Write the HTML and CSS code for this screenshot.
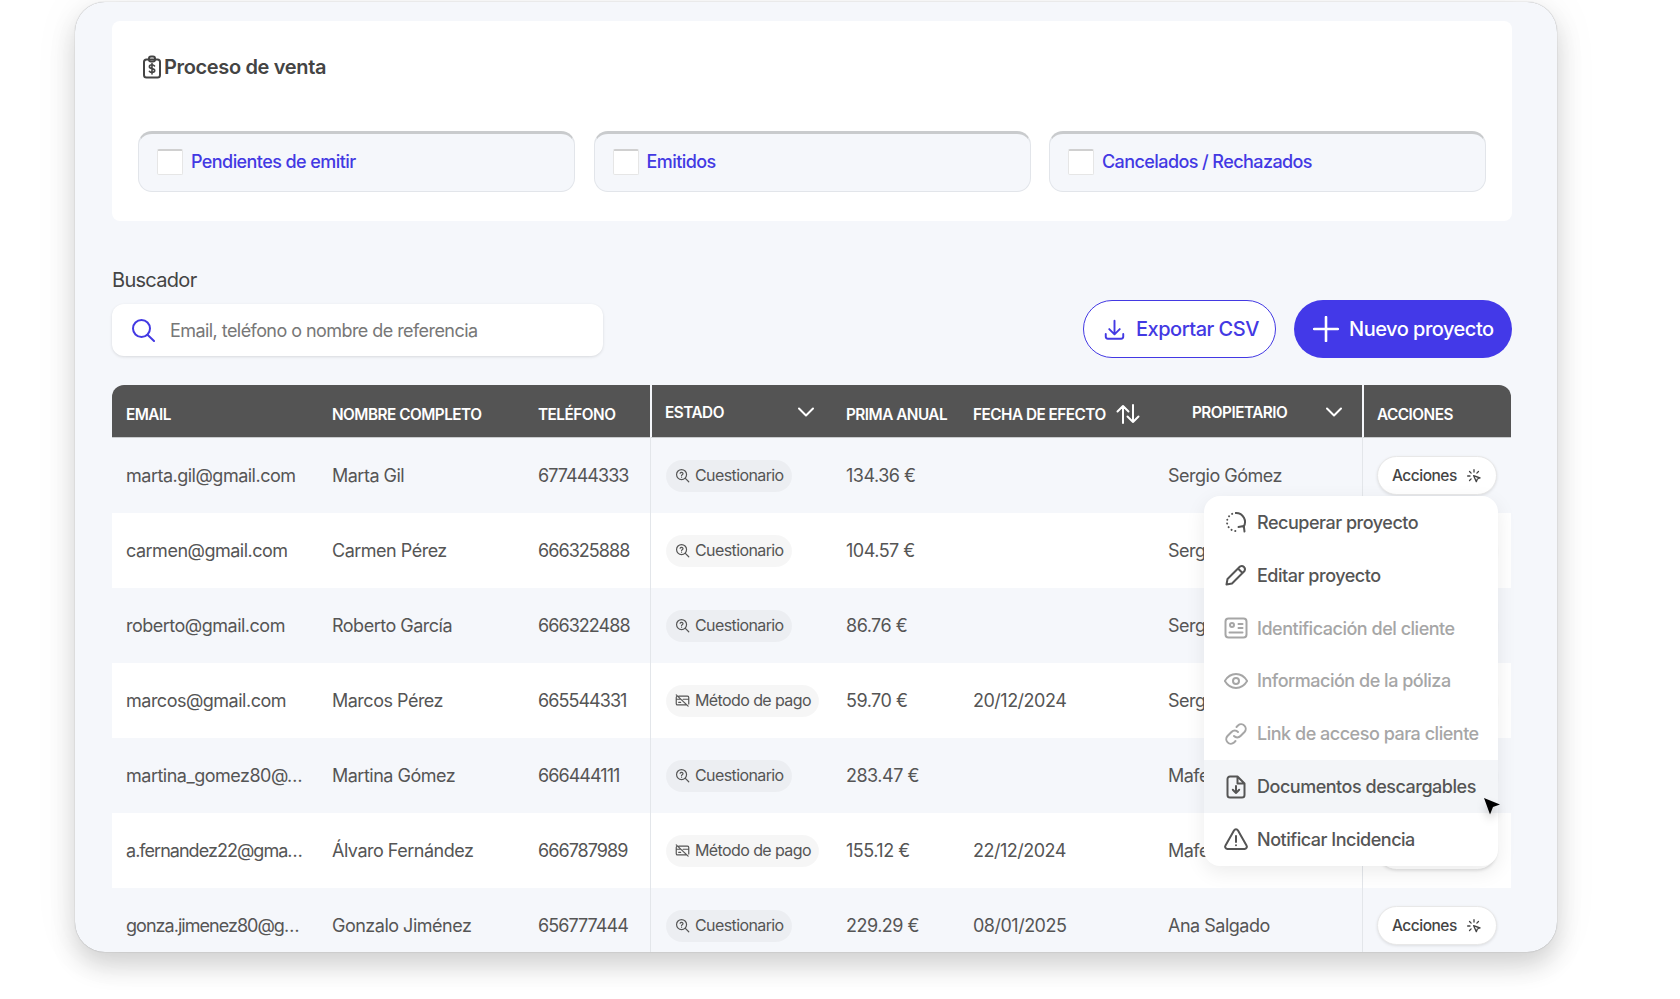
FILE: index.html
```html
<!DOCTYPE html>
<html lang="es">

<head>
    <meta charset="UTF-8">
    <link rel="stylesheet" href="styles.css">
    <title>Proceso de venta</title>
</head>

<body>
    <svg class="sprite" xmlns="http://www.w3.org/2000/svg">
        <symbol id="iconQuestion" viewBox="0 0 24 24">
            <circle cx="10.5" cy="10.5" r="8" />
            <path d="M16.5 16.5 22 22M8.2 8.4a2.4 2.4 0 0 1 4.6.6c0 1.5-2.3 1.9-2.3 3.1M10.5 14.6v.1" />
        </symbol>
        <symbol id="iconCard" viewBox="0 0 24 24">
            <path d="M6 5h14a2 2 0 0 1 2 2v10.500M18 19H4a2 2 0 0 1-2-2V7a2 2 0 0 1 .8-1.600M2 10h6M13 10h9M2 3l19 18M6 15h3" />
        </symbol>
        <symbol id="iconClick" viewBox="0 0 24 24">
            <path d="M11.500 11.500 21 15l-4 1.500-1.500 4zM12 2.500V6M5.300 5.300l2.400 2.400M18.700 5.300l-2.400 2.400M2.500 12H6M5.300 18.700l2.400-2.400" />
        </symbol>
    </svg>

    <div class="card">
        <section class="panel">
            <h1 class="panelTitle">
                <svg class="icon" viewBox="0 0 24 24">
                    <rect x="4" y="4.500" width="16" height="18" rx="2.500" />
                    <rect x="9" y="1.500" width="6" height="5" rx="2" />
                    <path class="thin" d="M14.500 11c-.6-.8-1.500-1.200-2.500-1.200-1.500 0-2.600.7-2.600 1.900 0 2.600 5.300 1.200 5.300 3.900 0 1.200-1.200 1.900-2.700 1.900-1.100 0-2-.4-2.600-1.200M12 8.500v10.500" />
                </svg>
                Proceso de venta
            </h1>
            <div class="filters">
                <label class="filter"><span class="checkbox"></span>Pendientes de emitir</label>
                <label class="filter"><span class="checkbox"></span>Emitidos</label>
                <label class="filter"><span class="checkbox"></span>Cancelados / Rechazados</label>
            </div>
        </section>

        <div class="toolbar">
            <div class="search">
                <div class="searchLabel">Buscador</div>
                <div class="searchBox">
                    <svg class="searchIcon" viewBox="0 0 24 24">
                        <circle cx="10.500" cy="10.500" r="8.500" />
                        <path d="M16.500 16.800 23 23" />
                    </svg>
                    <span>Email, teléfono o nombre de referencia</span>
                </div>
            </div>
            <div class="toolbarButtons">
                <div class="button outline">
                    <svg class="buttonIcon" viewBox="0 0 24 24">
                        <path d="M12 2v15M6 11.500l6 6 6-6M2 17v3a2.500 2.500 0 0 0 2.500 2.500h15A2.500 2.500 0 0 0 22 20v-3" />
                    </svg>
                    Exportar CSV
                </div>
                <div class="button solid">
                    <svg class="buttonIcon plus" viewBox="0 0 24 24">
                        <path d="M12 1v22M1 12h22" />
                    </svg>
                    Nuevo proyecto
                </div>
            </div>
        </div>

        <table class="projects">
            <colgroup>
                <col class="colEmail">
                <col class="colName">
                <col class="colPhone">
                <col class="colState">
                <col class="colPrice">
                <col class="colDate">
                <col class="colOwner">
                <col class="colActions">
            </colgroup>
            <thead>
                <tr>
                    <th>Email</th>
                    <th>Nombre completo</th>
                    <th>Teléfono</th>
                    <th class="divider">
                        <div class="thFilter">Estado
                            <svg class="chevron" viewBox="0 0 16 10"><path d="M1 1.500 8 8.500l7-7" /></svg>
                        </div>
                    </th>
                    <th>Prima anual</th>
                    <th>
                        <div class="thSort">Fecha de efecto
                            <svg class="sort" viewBox="0 0 24 20"><path d="M7 19V2M1.500 7.500 7 2l5.500 5.500M17 1v17M11.500 12.500 17 18l5.500-5.500" /></svg>
                        </div>
                    </th>
                    <th>
                        <div class="thFilter owner">Propietario
                            <svg class="chevron" viewBox="0 0 16 10"><path d="M1 1.500 8 8.500l7-7" /></svg>
                        </div>
                    </th>
                    <th class="divider">Acciones</th>
                </tr>
            </thead>
            <tbody>
                <tr>
                    <td>marta.gil@gmail.com</td>
                    <td>Marta Gil</td>
                    <td class="phone">677444333</td>
                    <td class="divider"><span class="pill"><svg class="pillIcon"><use href="#iconQuestion" /></svg>Cuestionario</span></td>
                    <td>134.36 €</td>
                    <td></td>
                    <td>Sergio Gómez</td>
                    <td class="divider"><span class="actions">Acciones<svg class="clickIcon"><use href="#iconClick" /></svg></span></td>
                </tr>
                <tr>
                    <td>carmen@gmail.com</td>
                    <td>Carmen Pérez</td>
                    <td class="phone">666325888</td>
                    <td class="divider"><span class="pill"><svg class="pillIcon"><use href="#iconQuestion" /></svg>Cuestionario</span></td>
                    <td>104.57 €</td>
                    <td></td>
                    <td>Sergio Gómez</td>
                    <td class="divider"><span class="actions">Acciones<svg class="clickIcon"><use href="#iconClick" /></svg></span></td>
                </tr>
                <tr>
                    <td>roberto@gmail.com</td>
                    <td>Roberto García</td>
                    <td class="phone">666322488</td>
                    <td class="divider"><span class="pill"><svg class="pillIcon"><use href="#iconQuestion" /></svg>Cuestionario</span></td>
                    <td>86.76 €</td>
                    <td></td>
                    <td>Sergio Gómez</td>
                    <td class="divider"><span class="actions">Acciones<svg class="clickIcon"><use href="#iconClick" /></svg></span></td>
                </tr>
                <tr>
                    <td>marcos@gmail.com</td>
                    <td>Marcos Pérez</td>
                    <td class="phone">665544331</td>
                    <td class="divider"><span class="pill"><svg class="pillIcon"><use href="#iconCard" /></svg>Método de pago</span></td>
                    <td>59.70 €</td>
                    <td>20/12/2024</td>
                    <td>Sergio Gómez</td>
                    <td class="divider"><span class="actions">Acciones<svg class="clickIcon"><use href="#iconClick" /></svg></span></td>
                </tr>
                <tr>
                    <td>martina_gomez80@…</td>
                    <td>Martina Gómez</td>
                    <td class="phone">666444111</td>
                    <td class="divider"><span class="pill"><svg class="pillIcon"><use href="#iconQuestion" /></svg>Cuestionario</span></td>
                    <td>283.47 €</td>
                    <td></td>
                    <td>Mafe Ortiz</td>
                    <td class="divider"><span class="actions">Acciones<svg class="clickIcon"><use href="#iconClick" /></svg></span></td>
                </tr>
                <tr>
                    <td class="cut">a.fernandez22@gma…</td>
                    <td>Álvaro Fernández</td>
                    <td class="phone">666787989</td>
                    <td class="divider"><span class="pill"><svg class="pillIcon"><use href="#iconCard" /></svg>Método de pago</span></td>
                    <td>155.12 €</td>
                    <td>22/12/2024</td>
                    <td>Mafe Ortiz</td>
                    <td class="divider"><span class="actions">Acciones<svg class="clickIcon"><use href="#iconClick" /></svg></span></td>
                </tr>
                <tr>
                    <td class="cut">gonza.jimenez80@g…</td>
                    <td>Gonzalo Jiménez</td>
                    <td class="phone">656777444</td>
                    <td class="divider"><span class="pill"><svg class="pillIcon"><use href="#iconQuestion" /></svg>Cuestionario</span></td>
                    <td>229.29 €</td>
                    <td>08/01/2025</td>
                    <td>Ana Salgado</td>
                    <td class="divider"><span class="actions">Acciones<svg class="clickIcon"><use href="#iconClick" /></svg></span></td>
                </tr>
            </tbody>
        </table>

        <div class="menu">
            <div class="menuItem">
                <svg class="menuIcon" viewBox="0 0 24 24">
                    <path d="M12 3a9 9 0 0 1 7.500 14" />
                    <path class="dots" d="M12 3a9 9 0 0 0 0 18h3" />
                    <path d="M20.500 21.500 19.800 16l-5.300 1" />
                </svg>
                Recuperar proyecto
            </div>
            <div class="menuItem">
                <svg class="menuIcon" viewBox="0 0 24 24">
                    <path d="M3.500 16 16 3.500a3.300 3.300 0 0 1 4.500 4.500L8 20.500l-5.500 1zM14 5.500 18.500 10" />
                </svg>
                Editar proyecto
            </div>
            <div class="menuItem disabled">
                <svg class="menuIcon" viewBox="0 0 24 24">
                    <rect x="1.500" y="2.500" width="21" height="19" rx="3" />
                    <circle cx="8" cy="9" r="2" />
                    <path d="M14.500 8h4M14.500 12h4M5.500 16.500h13" />
                </svg>
                Identificación del cliente
            </div>
            <div class="menuItem disabled">
                <svg class="menuIcon" viewBox="0 0 24 24">
                    <path d="M.800 12C3.500 7.500 7.300 5 12 5s8.500 2.500 11.200 7c-2.700 4.500-6.500 7-11.200 7S3.500 16.500.800 12z" />
                    <circle cx="12" cy="12" r="3" />
                </svg>
                Información de la póliza
            </div>
            <div class="menuItem disabled">
                <svg class="menuIcon" viewBox="0 0 24 24">
                    <path d="M10 14a4.500 4.500 0 0 0 6.500 0l4-4A4.600 4.600 0 0 0 14 3.500l-1.500 1.500M14 10a4.500 4.500 0 0 0-6.500 0l-4 4a4.600 4.600 0 0 0 6.500 6.500l1.500-1.500" />
                </svg>
                Link de acceso para cliente
            </div>
            <div class="menuItem hover">
                <svg class="menuIcon" viewBox="0 0 24 24">
                    <path d="M13.500 1.500H6A2.500 2.500 0 0 0 3.500 4v16A2.500 2.500 0 0 0 6 22.500h12a2.500 2.500 0 0 0 2.500-2.500V8.500zM13.500 1.500v7h7M12 11v7M8.800 14.800 12 18l3.200-3.200" />
                </svg>
                Documentos descargables
            </div>
            <div class="menuItem">
                <svg class="menuIcon" viewBox="0 0 24 24">
                    <path d="M10 3.500 1.500 18.500A2.300 2.300 0 0 0 3.500 22h17a2.300 2.300 0 0 0 2-3.500L14 3.500a2.300 2.300 0 0 0-4 0zM12 9v6M12 18.200v.1" />
                </svg>
                Notificar Incidencia
            </div>
        </div>

        <svg class="cursor" viewBox="0 0 16 17">
            <path d="M0 0 16 6.500 9 9 6 16.500z" />
        </svg>
    </div>
</body>

</html>
```
FILE: styles.css
```css
* {
    box-sizing: border-box;
}

body {
    margin: 0;
    background: white;
    font-family: Inter, "Liberation Sans", sans-serif;
    color: #555;
    letter-spacing: -0.5px;
    height: 999px;
    overflow: hidden;
}

.sprite {
    display: none;
}

svg {
    fill: none;
    stroke: currentColor;
    stroke-linecap: round;
    stroke-linejoin: round;
    flex: none;
}

.card {
    position: relative;
    width: 1482px;
    height: 950px;
    margin: 2px 0 0 75px;
    padding: 19px 45px 0 37px;
    background: #f5f7fb;
    border-radius: 30px;
    box-shadow: 0 0 1px rgba(0, 0, 0, 0.4), 0 14px 26px rgba(0, 0, 0, 0.16), 0 0 50px rgba(0, 0, 0, 0.05);
    overflow: hidden;
}

.panel {
    height: 200px;
    padding: 32px 26px 0;
    background: white;
    border-radius: 8px;
}

.panelTitle {
    display: flex;
    align-items: center;
    height: 28px;
    margin: 0;
    padding-left: 2px;
    font-size: 20px;
    font-weight: 600;
    line-height: 28px;
    letter-spacing: -0.35px;
    color: #444;
}

.panelTitle .icon {
    width: 24px;
    height: 24px;
    stroke-width: 2;
}

.panelTitle .thin {
    stroke-width: 1.600;
}

.filters {
    display: grid;
    grid-template-columns: repeat(3, 1fr);
    gap: 18.500px;
    margin-top: 50px;
}

.filter {
    display: flex;
    align-items: center;
    gap: 8px;
    height: 61px;
    padding: 0 0 2px 18px;
    background: #f5f7fb;
    border: 1px solid #e2e5ea;
    border-top: 3px solid #c9cbcd;
    border-radius: 14px;
    font-size: 18px;
    font-weight: 500;
    letter-spacing: -0.580px;
    color: #4339e3;
}

.checkbox {
    width: 26px;
    height: 26px;
    background: white;
    border: 1px solid #e6e6e6;
    border-top: 2px solid #d0d0d0;
    border-radius: 2px;
}

.toolbar {
    display: flex;
    justify-content: space-between;
    align-items: flex-end;
    height: 90px;
    margin-top: 47px;
}

.search {
    width: 491px;
    padding-bottom: 2px;
}

.searchLabel {
    height: 24px;
    margin-bottom: 12px;
    font-size: 20px;
    line-height: 24px;
    letter-spacing: -0.700px;
    color: #444;
}

.searchBox {
    display: flex;
    align-items: center;
    gap: 15px;
    height: 52px;
    padding-left: 19px;
    background: white;
    border-radius: 12px;
    box-shadow: 0 1px 3px rgba(0, 0, 0, 0.12);
    font-size: 18px;
    letter-spacing: -0.560px;
    color: #777;
}

.searchIcon {
    width: 24px;
    height: 24px;
    color: #4339e3;
    stroke-width: 2;
}

.toolbarButtons {
    display: flex;
    gap: 18px;
}

.button {
    display: flex;
    align-items: center;
    height: 58px;
    border-radius: 29px;
    font-size: 20px;
    font-weight: 500;
}

.button.outline {
    gap: 11px;
    width: 193px;
    padding-left: 20px;
    background: white;
    border: 1.500px solid #4339e3;
    color: #4339e3;
}

.button.solid {
    gap: 10px;
    width: 218px;
    padding-left: 19px;
    background: #4339e8;
    color: white;
}

.buttonIcon {
    width: 21px;
    height: 21px;
    stroke-width: 2.200;
}

.buttonIcon.plus {
    width: 26px;
    height: 26px;
    stroke-width: 2.400;
}

.projects {
    width: 1399px;
    margin-top: 27px;
    table-layout: fixed;
    border-collapse: separate;
    border-spacing: 0;
}

.colEmail,
.colName {
    width: 206px;
}

.colPhone {
    width: 126px;
}

.colState {
    width: 182px;
}

.colPrice {
    width: 127px;
}

.colDate {
    width: 195px;
}

.colOwner {
    width: 208px;
}

.colActions {
    width: 149px;
}

.projects th {
    height: 53px;
    padding: 6px 0 0 14px;
    background: #545454;
    border-bottom: 1px solid #c9cbcd;
    font-size: 15.300px;
    font-weight: 600;
    text-align: left;
    text-transform: uppercase;
    white-space: nowrap;
    color: white;
}

.projects th:first-child {
    border-top-left-radius: 12px;
}

.projects th:last-child {
    border-top-right-radius: 12px;
}

.projects th.divider {
    padding-left: 13px;
    border-left: 2px solid #f5f7fb;
}

.thFilter {
    display: flex;
    justify-content: space-between;
    align-items: center;
    padding: 0 18px 4px 0;
}

.thFilter.owner {
    padding: 0 20px 4px 24px;
}

.thSort {
    display: flex;
    align-items: center;
    gap: 10px;
}

.chevron {
    width: 16px;
    height: 10px;
    stroke-width: 2;
}

.sort {
    width: 24px;
    height: 20px;
    stroke-width: 2;
}

.projects td {
    height: 75px;
    padding: 0 0 0 14px;
    font-size: 18px;
    white-space: nowrap;
}

.projects td.phone {
    letter-spacing: -0.950px;
}

.projects td.cut {
    letter-spacing: -0.970px;
}

.projects td.divider {
    padding-left: 14px;
    border-left: 1px solid #e3e6ea;
}

.projects tbody tr:nth-child(even) td {
    background: white;
}

.pill {
    display: inline-flex;
    align-items: center;
    gap: 5px;
    height: 32px;
    margin-left: 1px;
    padding: 0 8px 1px 9px;
    background: rgba(0, 0, 0, 0.035);
    border-radius: 16px;
    font-size: 16px;
    letter-spacing: -0.600px;
    vertical-align: middle;
}

.pillIcon {
    width: 15px;
    height: 15px;
    stroke-width: 1.900;
}

.actions {
    display: inline-flex;
    align-items: center;
    gap: 9px;
    width: 120px;
    height: 39px;
    padding-left: 14px;
    background: white;
    border: 1px solid #e8e8e8;
    border-radius: 20px;
    box-shadow: 0 1px 3px rgba(0, 0, 0, 0.1);
    font-size: 15.500px;
    font-weight: 500;
    color: #444;
    vertical-align: middle;
}

.clickIcon {
    width: 16px;
    height: 16px;
    stroke-width: 2;
}

.menu {
    position: absolute;
    top: 494px;
    left: 1129px;
    width: 294px;
    background: white;
    border-radius: 16px;
    box-shadow: 0 6px 20px rgba(0, 0, 0, 0.08);
    overflow: hidden;
}

.menuItem {
    display: flex;
    align-items: center;
    gap: 9px;
    height: 52.850px;
    padding-left: 20px;
    font-size: 18px;
    font-weight: 500;
    letter-spacing: -0.480px;
}

.menuItem.disabled {
    color: #a6a6a6;
}

.menuItem.hover {
    background: #f3f5f8;
}

.menuIcon {
    width: 24px;
    height: 24px;
    stroke-width: 2;
}

.menuIcon .dots {
    stroke-dasharray: 0.100 3.800;
}

.cursor {
    position: absolute;
    top: 796px;
    left: 1409px;
    width: 16px;
    height: 17px;
    fill: black;
    stroke: none;
    filter: drop-shadow(0 6px 4px rgba(0, 0, 0, 0.2));
}
```
